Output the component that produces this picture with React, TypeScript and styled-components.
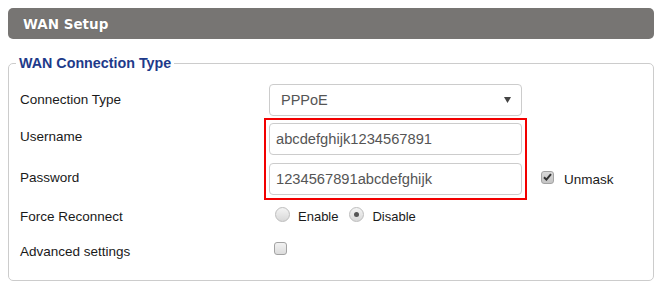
import React, { useState } from 'react'
import styled, { createGlobalStyle } from 'styled-components'

const GlobalStyle = createGlobalStyle`
  body {
    margin: 8px;
    background: #ffffff;
    font-family: "Liberation Sans", Arial, sans-serif;
    color: #222222;
  }
`

const Header = styled.div`
  height: 31px;
  margin-right: 1px;
  display: flex;
  align-items: center;
  padding-left: 15px;
  background: #777573;
  border-radius: 5px;
  color: #ffffff;
  font-family: "DejaVu Sans", Verdana, sans-serif;
  font-size: 13.5px;
  font-weight: 700;
  text-shadow: 0 0 1px rgba(0, 0, 0, 0.3);
`

const Fieldset = styled.fieldset`
  margin: 16px 1px 0 0;
  padding: 0 11px 10px 11px;
  border: 1px solid #cccccc;
  border-radius: 5px;
`

const Legend = styled.legend`
  margin-left: -4px;
  padding: 0 3px;
  color: #1e3a8a;
  font-size: 14.3px;
  font-weight: 700;
  line-height: 16px;
`

const Form = styled.div`
  margin-top: 13px;
  display: grid;
  grid-template-columns: 244px 263px auto;
  grid-template-rows: 34px 41px 41px 32px 38px;
`

const Label = styled.div<{ row: number }>`
  grid-column: 1;
  grid-row: ${({ row }) => row};
  align-self: center;
  padding-bottom: ${({ row }) => (row >= 4 ? 0 : 4)}px;
  font-size: 13.5px;
  color: #1a1a1a;
`

const Cell = styled.div<{ row: number; inset: number }>`
  grid-column: 2;
  grid-row: ${({ row }) => row};
  display: flex;
  align-items: ${({ row }) => (row === 1 ? 'flex-start' : 'center')};
  padding-left: ${({ inset }) => inset}px;
`

const SelectBox = styled.div`
  box-sizing: border-box;
  width: 253px;
  height: 32px;
  display: flex;
  align-items: center;
  justify-content: space-between;
  padding: 0 10px 0 11px;
  border: 1px solid #cccccc;
  border-radius: 4px;
  font-size: 14.5px;
  color: #555555;
`

const Highlight = styled.div`
  grid-column: 2;
  grid-row: 2 / span 2;
  display: flex;
  flex-direction: column;
  gap: 8px;
  padding: 3px;
  border: 2px solid #f20000;
`

const TextInput = styled.input`
  box-sizing: border-box;
  width: 253px;
  height: 32px;
  margin: 0;
  padding: 0 6px;
  border: 1px solid #cccccc;
  border-radius: 4px;
  font-family: "Liberation Sans", Arial, sans-serif;
  font-size: 14.7px;
  color: #555555;
  outline: none;
`

const Side = styled.div`
  grid-column: 3;
  grid-row: 3;
  display: flex;
  align-items: center;
  padding-left: 14px;
  gap: 10px;
  font-size: 13.5px;
  color: #1a1a1a;
`

const Box = styled.span<{ checked?: boolean; lift?: number }>`
  box-sizing: border-box;
  width: 13px;
  height: 13px;
  margin-bottom: ${({ lift }) => lift || 0}px;
  display: inline-flex;
  align-items: center;
  justify-content: center;
  border: 1px solid #a3a3a3;
  border-radius: 3px;
  background: ${({ checked }) =>
    checked
      ? 'linear-gradient(#d9d9d9, #c4c4c4)'
      : 'linear-gradient(#f2f2f2, #dcdcdc)'};
`

const Radio = styled.span<{ checked?: boolean }>`
  box-sizing: border-box;
  width: 15px;
  height: 15px;
  margin-bottom: 3px;
  display: inline-flex;
  align-items: center;
  justify-content: center;
  border: 1px solid #bdbdbd;
  border-radius: 50%;
  background: linear-gradient(#f4f4f4, #d8d8d8);

  &::after {
    content: '';
    display: ${({ checked }) => (checked ? 'block' : 'none')};
    width: 5px;
    height: 5px;
    border-radius: 50%;
    background: #555555;
  }
`

const Option = styled.span`
  font-size: 13px;
  color: #1a1a1a;
  margin: 0 11px 0 8px;
`

const Caret = () => (
  <svg width="7" height="6" viewBox="0 0 7 6">
    <path d="M0 0 H7 L3.5 6 Z" fill="#444" />
  </svg>
)

const Tick = () => (
  <svg width="9" height="8" viewBox="0 0 9 8">
    <path d="M1 4.2 L3.4 6.6 L8 1.2" stroke="#333" strokeWidth="2" fill="none" />
  </svg>
)

const App = () => {
  const [username, setUsername] = useState('abcdefghijk1234567891')
  const [password, setPassword] = useState('1234567891abcdefghijk')
  const [reconnect, setReconnect] = useState(false)

  return (
    <>
      <GlobalStyle />
      <Header>WAN Setup</Header>
      <Fieldset>
        <Legend>WAN Connection Type</Legend>
        <Form>
          <Label row={1}>Connection Type</Label>
          <Cell row={1} inset={5}>
            <SelectBox>
              <span>PPPoE</span>
              <Caret />
            </SelectBox>
          </Cell>

          <Label row={2}>Username</Label>
          <Label row={3}>Password</Label>
          <Highlight>
            <TextInput value={username} onChange={(e) => setUsername(e.target.value)} />
            <TextInput value={password} onChange={(e) => setPassword(e.target.value)} />
          </Highlight>
          <Side>
            <Box checked lift={5}>
              <Tick />
            </Box>
            <span>Unmask</span>
          </Side>

          <Label row={4}>Force Reconnect</Label>
          <Cell row={4} inset={11}>
            <Radio checked={reconnect} onClick={() => setReconnect(true)} />
            <Option>Enable</Option>
            <Radio checked={!reconnect} onClick={() => setReconnect(false)} />
            <Option>Disable</Option>
          </Cell>

          <Label row={5}>Advanced settings</Label>
          <Cell row={5} inset={10}>
            <Box lift={6} />
          </Cell>
        </Form>
      </Fieldset>
    </>
  )
}

export default App
